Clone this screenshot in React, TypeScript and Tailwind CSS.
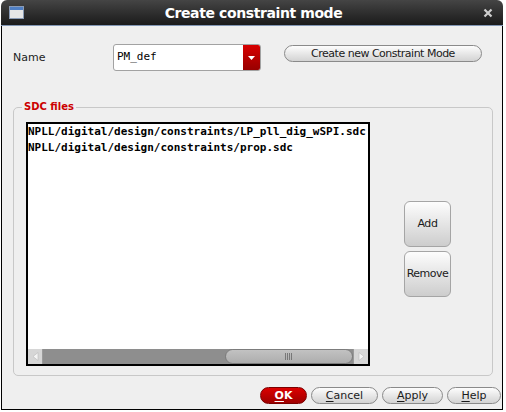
import React from 'react';

const sans = "font-['DejaVu_Sans',sans-serif]";
const mono = "font-['DejaVu_Sans_Mono',monospace]";

const files = [
  'NPLL/digital/design/constraints/LP_pll_dig_wSPI.sdc',
  'NPLL/digital/design/constraints/prop.sdc',
];

function PillButton({ label, width, mnemonic = true }: { label: string; width: string; mnemonic?: boolean }) {
  return (
    <button
      className={`${width} h-[17px] rounded-full border border-[#8a8a8a] bg-linear-to-b from-[#fdfdfd] to-[#d3d3d3] text-[11px] leading-none text-[#1a1a1a] flex items-center justify-center`}
    >
      {mnemonic ? (
        <>
          <span className="underline underline-offset-2">{label[0]}</span>
          {label.slice(1)}
        </>
      ) : (
        label
      )}
    </button>
  );
}

export default function App() {
  return (
    <div className={`w-[506px] h-[412px] bg-white overflow-hidden ${sans}`}>
      <div className="ml-[1px] w-[502px] flex flex-col">
        {/* Title bar */}
        <div className="h-[26px] rounded-t-[6px] bg-linear-to-b from-[#454545] to-[#1b1b1b] border-b border-[#8196b4] flex items-center px-[8px]">
          <div className="w-[15px] h-[13px] border border-[#8a9bb5] bg-[#e6e6e6] flex flex-col">
            <div className="h-[3px] bg-[#4f7fc4]" />
          </div>
          <div className="flex-1 text-center text-white font-bold text-[14px] tracking-[-0.4px] leading-none">
            Create constraint mode
          </div>
          <svg width="10" height="10" viewBox="0 0 10 10" className="mr-[2px]">
            <path d="M1.5 1.5 L8.5 8.5 M8.5 1.5 L1.5 8.5" stroke="#cfcfcf" strokeWidth="2.2" />
          </svg>
        </div>

        {/* Body */}
        <div className="h-[384px] bg-[#efefef] border-x border-b border-black pl-[11px] pr-[1px] pt-[18px] flex flex-col">
          <div className="flex items-start h-[27px]">
            <div className="w-[100px] leading-[27px] text-[11px] text-[#222]">Name</div>
            <div className="w-[148px] h-[27px] flex rounded-[3px] border border-[#a2a2a2] bg-white overflow-hidden">
              <div className={`flex-1 pl-[3px] flex items-center text-[11px] text-black ${mono}`}>PM_def</div>
              <div className="w-[17px] bg-linear-to-b from-[#d80000] to-[#980000] flex items-center justify-center">
                <svg width="7" height="4" viewBox="0 0 7 4">
                  <path d="M0 0 H7 L3.5 4 Z" fill="#fff" />
                </svg>
              </div>
            </div>
            <button className="ml-[23px] mt-[1px] w-[198px] h-[17px] rounded-full border border-[#8a8a8a] bg-linear-to-b from-[#fdfdfd] to-[#d3d3d3] text-[11px] tracking-[-0.5px] leading-none text-[#1a1a1a]">
              Create new Constraint Mode
            </button>
          </div>

          {/* SDC files group */}
          <div className="mt-[36px] w-[480px] h-[269px] rounded-[5px] border border-[#c8c8c8] relative pl-[12px] pt-[14px] flex">
            <div className="absolute -top-[7px] left-[8px] px-[2px] bg-[#efefef] text-[10px] font-bold text-[#cc0000] leading-[12px]">
              SDC files
            </div>
            <div className="w-[344px] h-[244px] border-2 border-black bg-white flex flex-col">
              <div className={`flex-1 text-[11px] font-bold leading-[16px] text-black whitespace-nowrap overflow-hidden ${mono}`}>
                {files.map((f) => (
                  <div key={f}>{f}</div>
                ))}
              </div>
              <div className="h-[15px] flex bg-[#8e8e8e]">
                <div className="w-[15px] h-[15px] bg-[#d6d6d6] border-r border-[#9a9a9a] flex items-center justify-center">
                  <svg width="7" height="9" viewBox="0 0 7 9">
                    <path d="M6 0.5 L1 4.5 L6 8.5 Z" fill="#f4f4f4" stroke="#b8b8b8" strokeWidth="0.6" />
                  </svg>
                </div>
                <div className="flex-1 flex justify-end">
                  <div className="w-[128px] h-[15px] rounded-full border border-[#7c7c7c] bg-linear-to-b from-[#c2c2c2] to-[#adadad] flex items-center justify-center">
                    <svg width="8" height="7" viewBox="0 0 8 7">
                      <path d="M0.5 0 V7 M2.5 0 V7 M4.5 0 V7 M6.5 0 V7" stroke="#777" strokeWidth="1" />
                    </svg>
                  </div>
                </div>
                <div className="w-[15px] h-[15px] bg-[#d6d6d6] border-l border-[#9a9a9a] flex items-center justify-center">
                  <svg width="7" height="9" viewBox="0 0 7 9">
                    <path d="M1 0.5 L6 4.5 L1 8.5 Z" fill="#f4f4f4" stroke="#b8b8b8" strokeWidth="0.6" />
                  </svg>
                </div>
              </div>
            </div>
            <div className="ml-[34px] mt-[79px] w-[47px] flex flex-col gap-[4px]">
              <button className="h-[46px] rounded-[6px] border border-[#a5a5a5] bg-linear-to-b from-[#fdfdfd] to-[#cdcdcd] text-[11px] tracking-[-0.4px] text-[#1a1a1a]">
                Add
              </button>
              <button className="h-[46px] rounded-[6px] border border-[#a5a5a5] bg-linear-to-b from-[#fdfdfd] to-[#cdcdcd] text-[11px] tracking-[-0.5px] text-[#1a1a1a]">
                Remove
              </button>
            </div>
          </div>

          {/* Bottom buttons */}
          <div className="mt-[11px] flex justify-end gap-[4px]">
            <button className="w-[47px] h-[17px] rounded-full border border-[#7a0000] bg-linear-to-b from-[#dc0000] to-[#a00000] text-white font-bold text-[11px] leading-none flex items-center justify-center">
              <span className="underline underline-offset-2">O</span>K
            </button>
            <PillButton label="Cancel" width="w-[67px]" />
            <PillButton label="Apply" width="w-[61px]" />
            <PillButton label="Help" width="w-[54px]" />
          </div>
        </div>
      </div>
    </div>
  );
}
